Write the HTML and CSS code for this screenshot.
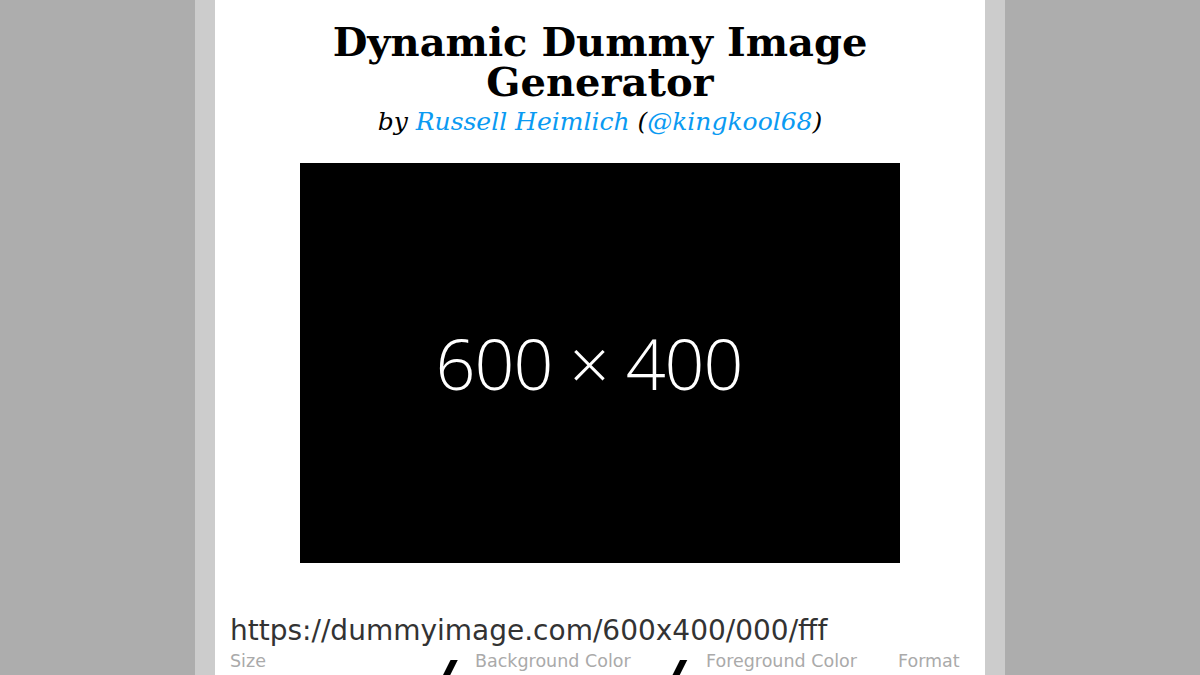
FILE: index.html
```html
<!DOCTYPE html>
<html>
<head>
<meta charset="utf-8">
<link rel="stylesheet" href="styles.css">
</head>
<body>
<div class="page">
  <div class="content">
    <h1 class="title">Dynamic Dummy Image Generator</h1>
    <p class="byline">by <a class="link" href="#">Russell Heimlich</a> (<a class="link" href="#">@kingkool68</a>)</p>
    <div class="preview"><span class="preview-text">600 × 400</span></div>
    <div class="url">https://dummyimage.com/600x400/000/fff</div>
    <div class="labels">
      <span class="label label-size">Size</span>
      <span class="label label-bg">Background Color</span>
      <span class="label label-fg">Foreground Color</span>
      <span class="label label-format">Format</span>
    </div>
    <div class="inputs">
      <span class="cell cell-size"></span>
      <span class="slash">/</span>
      <span class="cell cell-bg"></span>
      <span class="slash">/</span>
      <span class="cell cell-fg"></span>
    </div>
  </div>
</div>
</body>
</html>
```
FILE: styles.css
```css
html, body {
  margin: 0;
  padding: 0;
  height: 100%;
  overflow: hidden;
}
body {
  background: #adadad;
  font-family: "DejaVu Sans", sans-serif;
}
.page {
  width: 770px;
  margin: 0 auto;
  border-left: 20px solid #cccccc;
  border-right: 20px solid #cccccc;
  background: #ffffff;
  min-height: 100%;
}
.content {
  padding: 22px 15px 0 15px;
}
.title {
  margin: 0 20px;
  text-align: center;
  font-family: "DejaVu Serif", serif;
  font-weight: bold;
  font-size: 40px;
  line-height: 40px;
  color: #000;
}
.byline {
  margin: 5px 0 0 0;
  text-align: center;
  font-family: "DejaVu Serif", serif;
  font-style: italic;
  font-size: 25px;
  line-height: 30px;
  color: #000;
}
.link {
  color: #0a9af2;
  text-decoration: none;
}
.preview {
  width: 600px;
  height: 400px;
  margin: 26px auto 0 auto;
  background: #000;
  display: flex;
  align-items: center;
  justify-content: center;
}
.preview-text {
  color: #fff;
  font-family: "Open Sans", sans-serif;
  font-weight: 300;
  font-size: 70px;
  letter-spacing: -1px;
  margin-right: 22px;
}
.url {
  margin-top: 51px;
  font-family: "DejaVu Sans", sans-serif;
  font-size: 28px;
  line-height: 34px;
  color: #333;
}
.labels {
  display: flex;
  margin-top: 2px;
  font-family: "DejaVu Sans", sans-serif;
  font-size: 17.5px;
  line-height: 22px;
  color: #aaa;
}
.label-size { width: 245px; }
.label-bg { width: 231px; }
.label-fg { width: 192px; }
.inputs {
  display: flex;
  height: 64px;
  font-family: "DejaVu Sans", sans-serif;
  font-weight: bold;
  font-style: italic;
  font-size: 64px;
  line-height: 64px;
  margin-top: -19px;
}
.cell-size { width: 200px; }
.cell-bg { width: 206px; }
.slash { color: #000; }
```
